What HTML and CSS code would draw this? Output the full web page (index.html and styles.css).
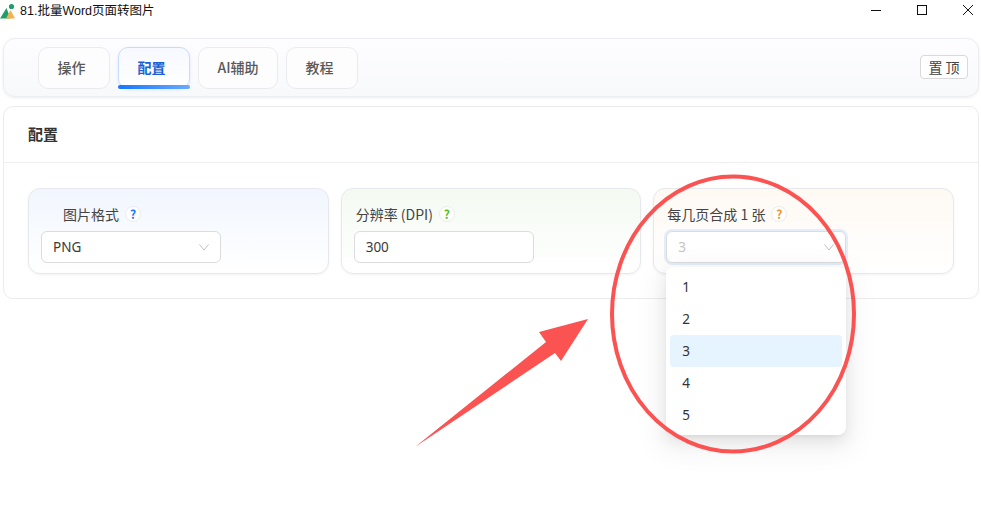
FILE: index.html
```html
<!DOCTYPE html>
<html lang="zh">
<head>
<meta charset="utf-8">
<title>81.批量Word页面转图片</title>
<link rel="stylesheet" href="styles.css">
</head>
<body>
<div class="titlebar">
  <svg class="logo" width="16" height="17" viewBox="0 0 16 17">
    <circle cx="11.5" cy="4.5" r="2.6" fill="#1e9e6a"/>
    <path d="M0 16.5 L6.5 6 L10.5 16.5Z" fill="#1e9e6a"/>
    <path d="M6 16.5 L10.5 8 L15 16.5Z" fill="#f7b14c"/>
  </svg>
  <span class="apptitle">81.批量Word页面转图片</span>
  <div class="winbtns">
    <svg width="12" height="12" viewBox="0 0 12 12"><path d="M1 6.5H11" stroke="#111" stroke-width="1"/></svg>
    <svg width="12" height="12" viewBox="0 0 12 12"><rect x="1.5" y="1.5" width="9" height="9" fill="none" stroke="#111"/></svg>
    <svg width="12" height="12" viewBox="0 0 12 12"><path d="M1 1L11 11M11 1L1 11" stroke="#111"/></svg>
  </div>
</div>

<nav class="navpanel">
  <div class="tabs">
    <div class="tab">操作</div>
    <div class="tab active">配置</div>
    <div class="tab wide">AI辅助</div>
    <div class="tab">教程</div>
  </div>
  <button class="pin">置 顶</button>
</nav>

<section class="content">
  <h2 class="heading">配置</h2>
  <div class="cards">
    <div class="card blue">
      <div class="label indent">图片格式 <span class="help help-blue">?</span></div>
      <div class="field"><span>PNG</span><svg class="chev" width="10" height="7" viewBox="0 0 10 7"><path d="M0.5 0.5L5 6L9.5 0.5" fill="none" stroke="#bfbfbf"/></svg></div>
    </div>
    <div class="card green">
      <div class="label">分辨率 (DPI) <span class="help help-green">?</span></div>
      <div class="field"><span>300</span></div>
    </div>
    <div class="card orange">
      <div class="label tight">每几页合成 1 张 <span class="help help-orange">?</span></div>
      <div class="field focus"><span class="placeholder">3</span><svg class="chev" width="10" height="7" viewBox="0 0 10 7"><path d="M0.5 0.5L5 6L9.5 0.5" fill="none" stroke="#bfbfbf"/></svg></div>
      <ul class="dropdown">
        <li>1</li>
        <li>2</li>
        <li class="selected">3</li>
        <li>4</li>
        <li>5</li>
      </ul>
    </div>
  </div>
</section>

<svg class="annotation" width="981" height="523" viewBox="0 0 981 523">
  <ellipse cx="733" cy="314" rx="121" ry="137.5" fill="none" stroke="#fb5252" stroke-width="4"/>
  <path d="M588 319L539 332L546 342L415 447L555 353L561 361Z" fill="#fb5252"/>
</svg>
</body>
</html>
```
FILE: styles.css
```css
* { box-sizing: border-box; }
html, body { margin: 0; padding: 0; }
body {
  width: 981px;
  height: 523px;
  overflow: hidden;
  background: #fff;
  font-family: "Noto Sans CJK SC", "Noto Sans", sans-serif;
  color: #333;
  position: relative;
}
.titlebar {
  height: 38px;
  display: flex;
  align-items: flex-start;
  padding-top: 2px;
  position: relative;
}
.logo { margin-right: 4px; flex: none; }
.apptitle {
  font-size: 12.5px;
  line-height: 17px;
  padding-top: 1px;
  color: #111;
  font-family: "Liberation Sans", "Noto Sans CJK SC", sans-serif;
}
.winbtns {
  margin-left: auto;
  margin-right: 7px;
  margin-top: 2px;
  display: flex;
  gap: 34px;
}
.navpanel {
  margin: 0 2px 0 3px;
  height: 59px;
  border: 1px solid #ebedf0;
  border-radius: 12px;
  background: linear-gradient(180deg, #fdfdff, #f8f9fb);
  box-shadow: 0 1px 3px rgba(0, 0, 0, .08);
  display: flex;
  align-items: center;
  padding: 0 10px 0 34px;
  justify-content: space-between;
}
.tabs { display: flex; gap: 8px; margin-top: 1px; }
.tab {
  width: 72px;
  height: 42px;
  border: 1px solid #e9ebef;
  border-radius: 10px;
  background: #fdfdfe;
  font-size: 14px;
  line-height: 38px;
  text-align: center;
  padding-right: 5px;
  color: #595959;
  font-weight: 500;
  position: relative;
}
.tab.wide { width: 80px; padding-right: 0; }
.tab.active {
  border-color: #c6dcff;
  background: linear-gradient(180deg, #f6f9ff, #fff);
  color: #1a5fd6;
  font-weight: 700;
  box-shadow: 0 1px 3px rgba(22, 119, 255, .12);
}
.tab.active::after {
  content: "";
  position: absolute;
  left: -1px;
  right: -1px;
  bottom: -1px;
  height: 4px;
  border-radius: 2px;
  background: linear-gradient(90deg, #1677ff, #69aaff);
}
.pin {
  width: 48px;
  height: 24px;
  padding: 0;
  border: 1px solid #d9d9d9;
  border-radius: 4px;
  background: #fff;
  font: 14px/22px "Noto Sans CJK SC", sans-serif;
  color: #444;
  margin-top: -1px;
}
.content {
  margin: 9px 2px 0 3px;
  height: 193px;
  border: 1px solid #ececef;
  border-radius: 10px;
  background: #fff;
}
.heading {
  margin: 0;
  height: 56px;
  padding: 0 24px;
  font-size: 15px;
  font-weight: 700;
  line-height: 54px;
  color: #333;
  border-bottom: 1px solid #efefef;
}
.cards {
  display: flex;
  gap: 12px;
  padding: 25px 24px 0;
}
.card {
  flex: 1;
  height: 86px;
  border: 1px solid #e6e8ec;
  border-radius: 12px;
  padding: 15px 12px 0;
  box-shadow: 0 1px 3px rgba(0, 0, 0, .05);
  position: relative;
}
.blue { background: linear-gradient(180deg, #f1f6fe, #fff); }
.green { background: linear-gradient(180deg, #f4faf2, #fff); }
.orange { background: linear-gradient(180deg, #fef9f3, #fff); }
.label {
  display: flex;
  align-items: center;
  gap: 3px;
  height: 20px;
  font-size: 14px;
  line-height: 20px;
  color: #444;
  padding-left: 2px;
}
.label.indent { padding-left: 22px; }
.label.tight { padding-left: 1px; }
.help {
  width: 16px;
  height: 16px;
  border: 1px solid #ececec;
  border-radius: 50%;
  background: #fff;
  font-size: 12px;
  line-height: 14px;
  text-align: center;
  font-weight: 700;
  margin-left: 3px;
}
.help-blue { color: #1677ff; }
.help-green { color: #52c41a; }
.help-orange { color: #f0932b; }
.field {
  width: 180px;
  height: 32px;
  margin-top: 7px;
  border: 1px solid #dcdcdc;
  border-radius: 6px;
  background: #fff;
  padding: 0 11px;
  display: flex;
  align-items: center;
  justify-content: space-between;
  font-size: 13.5px;
  font-family: "Noto Sans", sans-serif;
  color: #3a3a3a;
}
.field.focus { box-shadow: 0 0 0 2px #e3eefa; }
.placeholder { color: #c4c4c4; }
.dropdown {
  position: absolute;
  left: 12px;
  top: 78px;
  z-index: 2;
  width: 180px;
  height: 168px;
  margin: 0;
  padding: 4px;
  list-style: none;
  background: #fff;
  border-radius: 8px;
  box-shadow: 0 6px 16px rgba(0, 0, 0, .08), 0 3px 6px -4px rgba(0, 0, 0, .12), 0 9px 28px 8px rgba(0, 0, 0, .05);
  font-size: 13.5px;
  font-family: "Noto Sans", sans-serif;
  color: #333;
}
.dropdown li {
  height: 32px;
  line-height: 32px;
  padding: 0 12px;
  border-radius: 4px;
}
.dropdown .selected { background: #e6f4ff; }
.annotation {
  position: absolute;
  left: 0;
  top: 0;
  z-index: 3;
  pointer-events: none;
}
```
